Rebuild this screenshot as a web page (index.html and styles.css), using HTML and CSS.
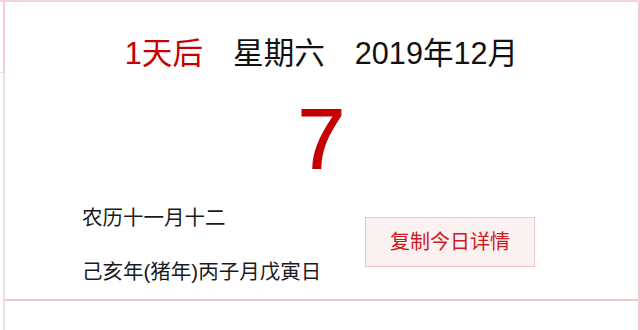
FILE: index.html
```html
<!DOCTYPE html>
<html lang="zh-CN">
<head>
<meta charset="utf-8">
<title>万年历</title>
<link rel="stylesheet" href="styles.css">
</head>
<body>
<div class="page">
  <div class="rail">
    <div class="rail-top"></div>
    <div class="rail-bottom"></div>
  </div>
  <div class="main">
    <div class="content">
      <div class="head">
        <span class="head-item red">1天后</span>
        <span class="head-item">星期六</span>
        <span class="head-item">2019年12月</span>
      </div>
      <div class="day">7</div>
      <div class="info">
        <div class="lunar">
          <p class="lunar-line">农历十一月十二</p>
          <p class="lunar-line">己亥年(猪年)丙子月戊寅日</p>
        </div>
        <button class="copy-btn" type="button">复制今日详情</button>
      </div>
    </div>
    <div class="below"></div>
  </div>
</div>
</body>
</html>
```

FILE: styles.css
```css
* {
  box-sizing: border-box;
}

html, body {
  margin: 0;
  padding: 0;
  background: #ffffff;
}

body {
  width: 640px;
  height: 330px;
  overflow: hidden;
  font-family: "Liberation Sans", "Noto Sans CJK SC", sans-serif;
  color: #111111;
}

.page {
  display: flex;
  height: 330px;
  border-top: 2px solid #f6d3d7;
}

.rail {
  width: 5px;
  display: flex;
  flex-direction: column;
}

.rail-top {
  height: 70px;
  border-right: 2px solid #f4cdd2;
}

.rail-bottom {
  flex: 1;
  border-top: 1px solid #e4e4e4;
  border-right: 2px solid #e3e3e3;
}

.main {
  flex: 1;
  display: flex;
  flex-direction: column;
  border-right: 2px solid #f3c9ce;
}

.content {
  height: 299px;
  border-bottom: 2px solid #f3c9ce;
  padding-top: 31px;
}

.head {
  display: flex;
  justify-content: center;
  gap: 30px;
  font-size: 30.6px;
  line-height: 40px;
  white-space: nowrap;
}

.red {
  color: #c40000;
}

.day {
  margin-top: 21px;
  text-align: center;
  font-size: 85px;
  line-height: 90px;
  color: #c40000;
  -webkit-text-stroke: 1.2px #c40000;
}

.info {
  display: flex;
  align-items: flex-start;
  margin-top: 7px;
  padding-left: 77px;
}

.lunar {
  flex: 0 0 283px;
}

.lunar-line {
  margin: 0;
  font-size: 20.5px;
  line-height: 54px;
  color: #1a1a1a;
  white-space: nowrap;
}

.copy-btn {
  margin-top: 26px;
  width: 170px;
  height: 50px;
  padding: 0;
  border: 1px solid #f1c4c9;
  background: #fbf1f1;
  color: #cc1a22;
  font-family: "Liberation Sans", "Noto Sans CJK SC", sans-serif;
  font-size: 20px;
  line-height: 48px;
  text-align: center;
}

.below {
  flex: 1;
}
```
